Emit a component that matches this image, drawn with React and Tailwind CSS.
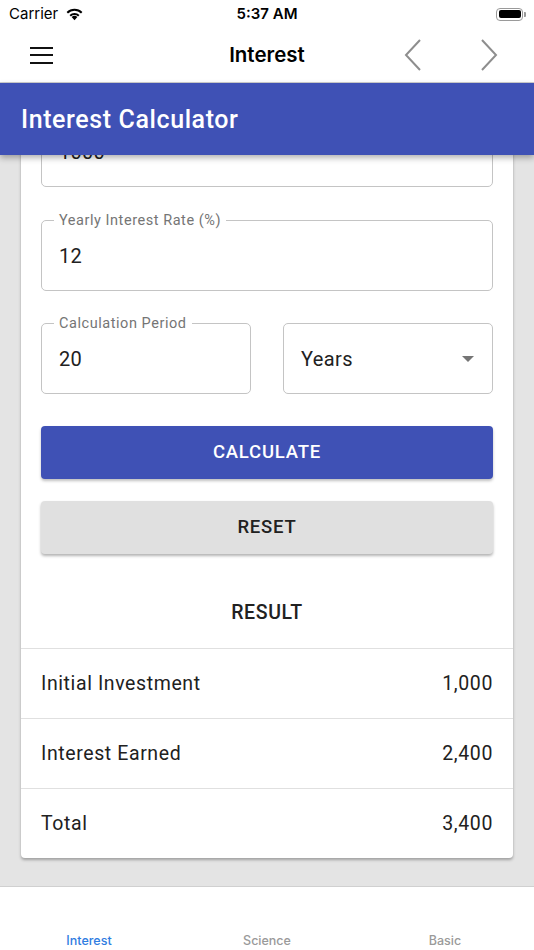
import { useState } from 'react';

const ROBOTO = { fontFamily: 'Roboto, "Noto Sans", sans-serif' };
const IOS = { fontFamily: 'Inter, "Liberation Sans", sans-serif' };

function StatusBar() {
  return (
    <div className="h-[28px] bg-white flex items-center justify-between relative" style={IOS}>
      <div className="flex items-center pl-[9px] gap-[7px]">
        <span className="text-[15px] text-black">Carrier</span>
        <svg width="19" height="14" viewBox="0 0 19 14">
          <path d="M9.5 13.2 L6.6 10.1 A4.2 4.2 0 0 1 12.4 10.1 Z" fill="#000" />
          <path d="M4.5 7.9 A7.2 7.2 0 0 1 14.5 7.9 L13.1 9.4 A5.2 5.2 0 0 0 5.9 9.4 Z" fill="#000" />
          <path d="M1.6 5 A11.2 11.2 0 0 1 17.4 5 L16 6.5 A9.2 9.2 0 0 0 3 6.5 Z" fill="#000" />
        </svg>
      </div>
      <span className="absolute left-1/2 -translate-x-1/2 text-[15px] font-semibold text-black">5:37 AM</span>
      <div className="pr-[8px] flex items-center">
        <div className="w-[27px] h-[13px] rounded-[4px] border border-[#9a9a9a] p-[1.5px]">
          <div className="w-full h-full rounded-[2px] bg-black" />
        </div>
        <div className="w-[2px] h-[5px] bg-[#9a9a9a] rounded-r-[1px] ml-[1px]" />
      </div>
    </div>
  );
}

function NavBar() {
  return (
    <div className="h-[55px] bg-white border-b border-[#cfcfcf] flex items-center relative" style={IOS}>
      <div className="pl-[30px] flex flex-col gap-[5.5px]">
        <div className="w-[23px] h-[2px] bg-[#111]" />
        <div className="w-[23px] h-[2px] bg-[#111]" />
        <div className="w-[23px] h-[2px] bg-[#111]" />
      </div>
      <span className="absolute left-1/2 -translate-x-1/2 text-[20.5px] font-semibold text-black">Interest</span>
      <div className="ml-auto flex items-center gap-[58px] pr-[36px]">
        <svg width="18" height="32" viewBox="0 0 18 32">
          <path d="M16 1 L2 16 L16 31" fill="none" stroke="#8e8e8e" strokeWidth="2" />
        </svg>
        <svg width="18" height="32" viewBox="0 0 18 32">
          <path d="M2 1 L16 16 L2 31" fill="none" stroke="#8e8e8e" strokeWidth="2" />
        </svg>
      </div>
    </div>
  );
}

function OutlinedField({ label, value, className = '' }) {
  return (
    <div className={`relative h-[71px] border border-[#c4c4c4] rounded-[5px] flex items-center px-[17px] ${className}`}>
      {label && (
        <span className="absolute -top-[11px] left-[12px] px-[5px] bg-white text-[14.5px] tracking-[0.55px] text-[#757575]">
          {label}
        </span>
      )}
      <span className="text-[20px] tracking-[0.3px] text-[#212121]">{value}</span>
    </div>
  );
}

function ResultRow({ label, value }) {
  return (
    <div className="h-[70px] border-t border-[#e0e0e0] flex items-center justify-between px-[20px] text-[19.5px] tracking-[0.6px] text-[#212121]">
      <span>{label}</span>
      <span>{value}</span>
    </div>
  );
}

function TabBar() {
  const tabs = ['Interest', 'Science', 'Basic'];
  const [active] = useState(0);
  return (
    <div className="h-[64px] bg-white border-t border-[#d0d0d0] grid grid-cols-3" style={IOS}>
      {tabs.map((t, i) => (
        <div key={t} className="flex items-end justify-center pb-[2px]">
          <span className={`text-[12.5px] leading-[14px] font-medium ${i === active ? 'text-[#2f7de1]' : 'text-[#9a9a9a]'}`}>{t}</span>
        </div>
      ))}
    </div>
  );
}

export default function App() {
  return (
    <div className="w-[534px] h-[950px] flex flex-col bg-white overflow-hidden">
      <StatusBar />
      <NavBar />
      <div className="relative z-10 h-[72px] bg-[#3f51b5] flex items-center px-[21px] pt-[1px] shadow-[0_3px_6px_rgba(0,0,0,0.3)]" style={ROBOTO}>
        <span className="text-white text-[25px] tracking-[0.6px] font-medium">Interest Calculator</span>
      </div>

      <div className="flex-1 bg-[#e4e4e4] overflow-hidden px-[21px]" style={ROBOTO}>
        <div className="-mt-[71px] bg-white rounded-b-[4px] shadow-[0_2px_3px_rgba(0,0,0,0.3)]">
          <div className="px-[20px] pt-[32px]">
            <OutlinedField label="Initial Investment" value="1000" />
            <OutlinedField label="Yearly Interest Rate (%)" value="12" className="mt-[33px]" />
            <div className="mt-[32px] grid grid-cols-2 gap-[32px]">
              <OutlinedField label="Calculation Period" value="20" />
              <div className="h-[71px] border border-[#c4c4c4] rounded-[5px] flex items-center justify-between pl-[17px] pr-[18px]">
                <span className="text-[20px] tracking-[0.4px] text-[#212121]">Years</span>
                <svg width="12" height="6" viewBox="0 0 12 6">
                  <path d="M0 0 L12 0 L6 6 Z" fill="#757575" />
                </svg>
              </div>
            </div>
            <button className="mt-[32px] w-full h-[53px] rounded-[4px] bg-[#3f51b5] text-white text-[18.5px] font-medium tracking-[0.8px] shadow-[0_2px_3px_rgba(0,0,0,0.25)]">
              CALCULATE
            </button>
            <button className="mt-[22px] w-full h-[53px] rounded-[4px] bg-[#e0e0e0] text-[#212121] text-[18.5px] font-medium tracking-[0.8px] shadow-[0_2px_3px_rgba(0,0,0,0.3)]">
              RESET
            </button>
          </div>
          <div className="pt-[44px] pb-[21px] text-center text-[19.5px] font-medium tracking-[0.6px] text-[#212121]">RESULT</div>
          <ResultRow label="Initial Investment" value="1,000" />
          <ResultRow label="Interest Earned" value="2,400" />
          <ResultRow label="Total" value="3,400" />
        </div>
      </div>

      <TabBar />
    </div>
  );
}
